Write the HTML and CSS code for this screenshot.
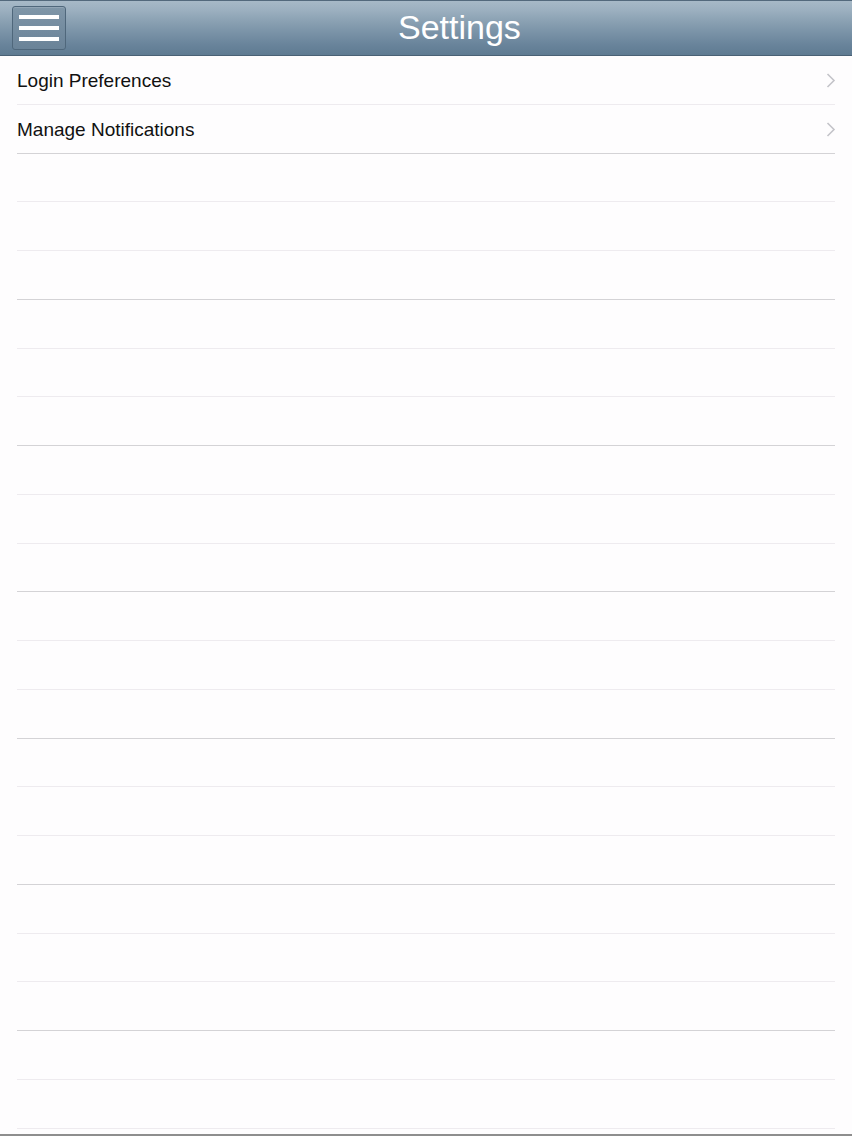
FILE: index.html
```html
<!DOCTYPE html>
<html lang="en">
<head>
<meta charset="utf-8">
<title>Settings</title>
<link rel="stylesheet" href="styles.css">
</head>
<body>
<div class="app">
  <header class="navbar">
    <button class="menu-btn" aria-label="Menu">
      <span class="bar"></span><span class="bar"></span><span class="bar"></span>
    </button>
    <h1 class="title">Settings</h1>
  </header>
  <ul class="list">
    <li class="row"><span class="label">Login Preferences</span><svg class="chevron" viewBox="0 0 10 15" width="10" height="15"><path d="M1.5 1 L8 7.5 L1.5 14" fill="none" stroke="#c4c4c9" stroke-width="1.6"/></svg></li>
    <li class="row strong"><span class="label">Manage Notifications</span><svg class="chevron" viewBox="0 0 10 15" width="10" height="15"><path d="M1.5 1 L8 7.5 L1.5 14" fill="none" stroke="#c4c4c9" stroke-width="1.6"/></svg></li>
    <li class="row"></li>
    <li class="row"></li>
    <li class="row strong"></li>
    <li class="row"></li>
    <li class="row"></li>
    <li class="row strong"></li>
    <li class="row"></li>
    <li class="row"></li>
    <li class="row strong"></li>
    <li class="row"></li>
    <li class="row"></li>
    <li class="row strong"></li>
    <li class="row"></li>
    <li class="row"></li>
    <li class="row strong"></li>
    <li class="row"></li>
    <li class="row"></li>
    <li class="row strong"></li>
    <li class="row"></li>
    <li class="row"></li>
  </ul>
  <div class="bottom-edge"></div>
</div>
</body>
</html>
```

FILE: styles.css
```css
* { box-sizing: border-box; }
html, body {
  margin: 0;
  padding: 0;
  height: 100%;
  background: #fefdfe;
  font-family: "Liberation Sans", Arial, Helvetica, sans-serif;
  overflow: hidden;
}
.app {
  display: flex;
  flex-direction: column;
  height: 1136px;
}
.navbar {
  flex: 0 0 56px;
  height: 56px;
  display: flex;
  align-items: center;
  position: relative;
  border-top: 1px solid #53697c;
  border-bottom: 1px solid #4a6175;
  background: linear-gradient(to bottom,
    #a7b9c7 0%,
    #9bafbf 18%,
    #889fb1 40%,
    #7790a5 62%,
    #68839a 82%,
    #5f7b92 100%);
}
.menu-btn {
  margin-left: 12px;
  width: 54px;
  height: 44px;
  padding: 0;
  border: 1px solid #4f677b;
  border-radius: 3px;
  background: linear-gradient(to bottom, #7f96a8, #6a8398);
  box-shadow: inset 0 1px 0 rgba(255,255,255,0.15);
  display: flex;
  flex-direction: column;
  align-items: center;
  justify-content: center;
  gap: 7px;
}
.bar {
  display: block;
  width: 40px;
  height: 4px;
  background: #ffffff;
}
.title {
  margin: 0 0 0 332px;
  font-weight: normal;
  font-size: 34px;
  color: #ffffff;
  letter-spacing: 0;
  line-height: 1;
  padding-bottom: 3px;
}
.list {
  list-style: none;
  margin: 0 17px;
  padding: 0;
  flex: 0 0 auto;
}
.row {
  height: 48.75px;
  display: flex;
  align-items: center;
  justify-content: space-between;
  border-bottom: 1px solid #eeebef;
}
.row.strong {
  border-bottom: 1px solid #d4d3d6;
}
.label {
  font-size: 19px;
  color: #111111;
  margin-top: 2px;
}
.chevron {
  margin-right: -1px;
  margin-top: 1px;
}
.bottom-edge {
  margin-top: auto;
  height: 2px;
  background: #8e8e8e;
}
```
